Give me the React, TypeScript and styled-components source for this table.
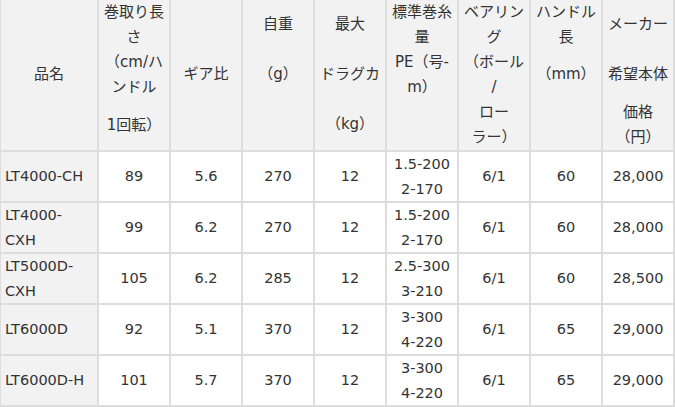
import styled, { createGlobalStyle } from "styled-components";

const GlobalStyle = createGlobalStyle`
  html, body {
    margin: 0;
    padding: 0;
    background: #fff;
  }
  body {
    font-family: "DejaVu Sans", "Noto Sans CJK JP", sans-serif;
    color: #333;
  }
`;

// a header line is either plain text or [gapAbove, text]
type HeadLine = string | [number, string];

interface Reel {
    name: string[];
    length: string;
    gear: string;
    weight: string;
    drag: string;
    line: string[];
    bearing: string;
    handle: string;
    price: string;
}

const headers: HeadLine[][] = [
    [[62, "品名"]],
    ["巻取り長", "さ", "（cm/ハ", "ンドル", [12.5, "1回転）"]],
    [[62, "ギア比"]],
    [[12, "自重"], [25, "（g）"]],
    [[12, "最大"], [25, "ドラグカ"], [25, "（kg）"]],
    ["標準巻糸", "量", "PE（号-", "m）"],
    ["ベアリン", "グ", "（ボール", "/", "ロー", "ラー）"],
    ["ハンドル", "長", [12, "（mm）"]],
    [[12, "メーカー"], [25, "希望本体"], [12.5, "価格"], "（円）"],
];

const reels: Reel[] = [
    { name: ["LT4000-CH"], length: "89", gear: "5.6", weight: "270", drag: "12", line: ["1.5-200", "2-170"], bearing: "6/1", handle: "60", price: "28,000" },
    { name: ["LT4000-", "CXH"], length: "99", gear: "6.2", weight: "270", drag: "12", line: ["1.5-200", "2-170"], bearing: "6/1", handle: "60", price: "28,000" },
    { name: ["LT5000D-", "CXH"], length: "105", gear: "6.2", weight: "285", drag: "12", line: ["2.5-300", "3-210"], bearing: "6/1", handle: "60", price: "28,500" },
    { name: ["LT6000D"], length: "92", gear: "5.1", weight: "370", drag: "12", line: ["3-300", "4-220"], bearing: "6/1", handle: "65", price: "29,000" },
    { name: ["LT6000D-H"], length: "101", gear: "5.7", weight: "370", drag: "12", line: ["3-300", "4-220"], bearing: "6/1", handle: "65", price: "29,000" },
];

const SpecTable = styled.table`
  table-layout: fixed;
  width: 675px;
  border-collapse: separate;
  border-spacing: 0;
  border-left: 1px solid #dddddd;
  font-size: 14.5px;
`;

const NameCol = styled.col`
  width: 98px;
`;

const DataCol = styled.col`
  width: 72px;
`;

const HeadCell = styled.th`
  box-sizing: border-box;
  height: 152px;
  padding: 0 4px;
  vertical-align: top;
  text-align: center;
  font-weight: normal;
  font-size: 15px;
  line-height: 25px;
  background: #f2f2f2;
  border-right: 2px solid #dddddd;
  border-bottom: 2px solid #dddddd;
`;

const HeadText = styled.div<{ $gap?: number }>`
  white-space: nowrap;
  margin-top: ${(p) => p.$gap ?? 0}px;
`;

const Cell = styled.td<{ $name?: boolean }>`
  box-sizing: border-box;
  height: 51px;
  padding: 0 4px;
  vertical-align: middle;
  text-align: ${(p) => (p.$name ? "left" : "center")};
  line-height: 24.5px;
  white-space: nowrap;
  background: ${(p) => (p.$name ? "#f2f2f2" : "#fff")};
  border-right: 2px solid #dddddd;
  border-bottom: 2px solid #dddddd;
`;

const CellLine = styled.div`
  white-space: nowrap;
`;

function Lines({ items }: { items: string[] }) {
    return (
        <>
            {items.map((t, i) => (
                <CellLine key={i}>{t}</CellLine>
            ))}
        </>
    );
}

export default function App() {
    return (
        <>
            <GlobalStyle />
            <SpecTable>
                <colgroup>
                    <NameCol />
                    {headers.slice(1).map((_, i) => (
                        <DataCol key={i} />
                    ))}
                </colgroup>
                <thead>
                    <tr>
                        {headers.map((lines, i) => (
                            <HeadCell key={i}>
                                {lines.map((l, j) =>
                                    typeof l === "string" ? (
                                        <HeadText key={j}>{l}</HeadText>
                                    ) : (
                                        <HeadText key={j} $gap={l[0]}>
                                            {l[1]}
                                        </HeadText>
                                    )
                                )}
                            </HeadCell>
                        ))}
                    </tr>
                </thead>
                <tbody>
                    {reels.map((r) => (
                        <tr key={r.name.join("")}>
                            <Cell $name>
                                <Lines items={r.name} />
                            </Cell>
                            <Cell>{r.length}</Cell>
                            <Cell>{r.gear}</Cell>
                            <Cell>{r.weight}</Cell>
                            <Cell>{r.drag}</Cell>
                            <Cell>
                                <Lines items={r.line} />
                            </Cell>
                            <Cell>{r.bearing}</Cell>
                            <Cell>{r.handle}</Cell>
                            <Cell>{r.price}</Cell>
                        </tr>
                    ))}
                </tbody>
            </SpecTable>
        </>
    );
}
